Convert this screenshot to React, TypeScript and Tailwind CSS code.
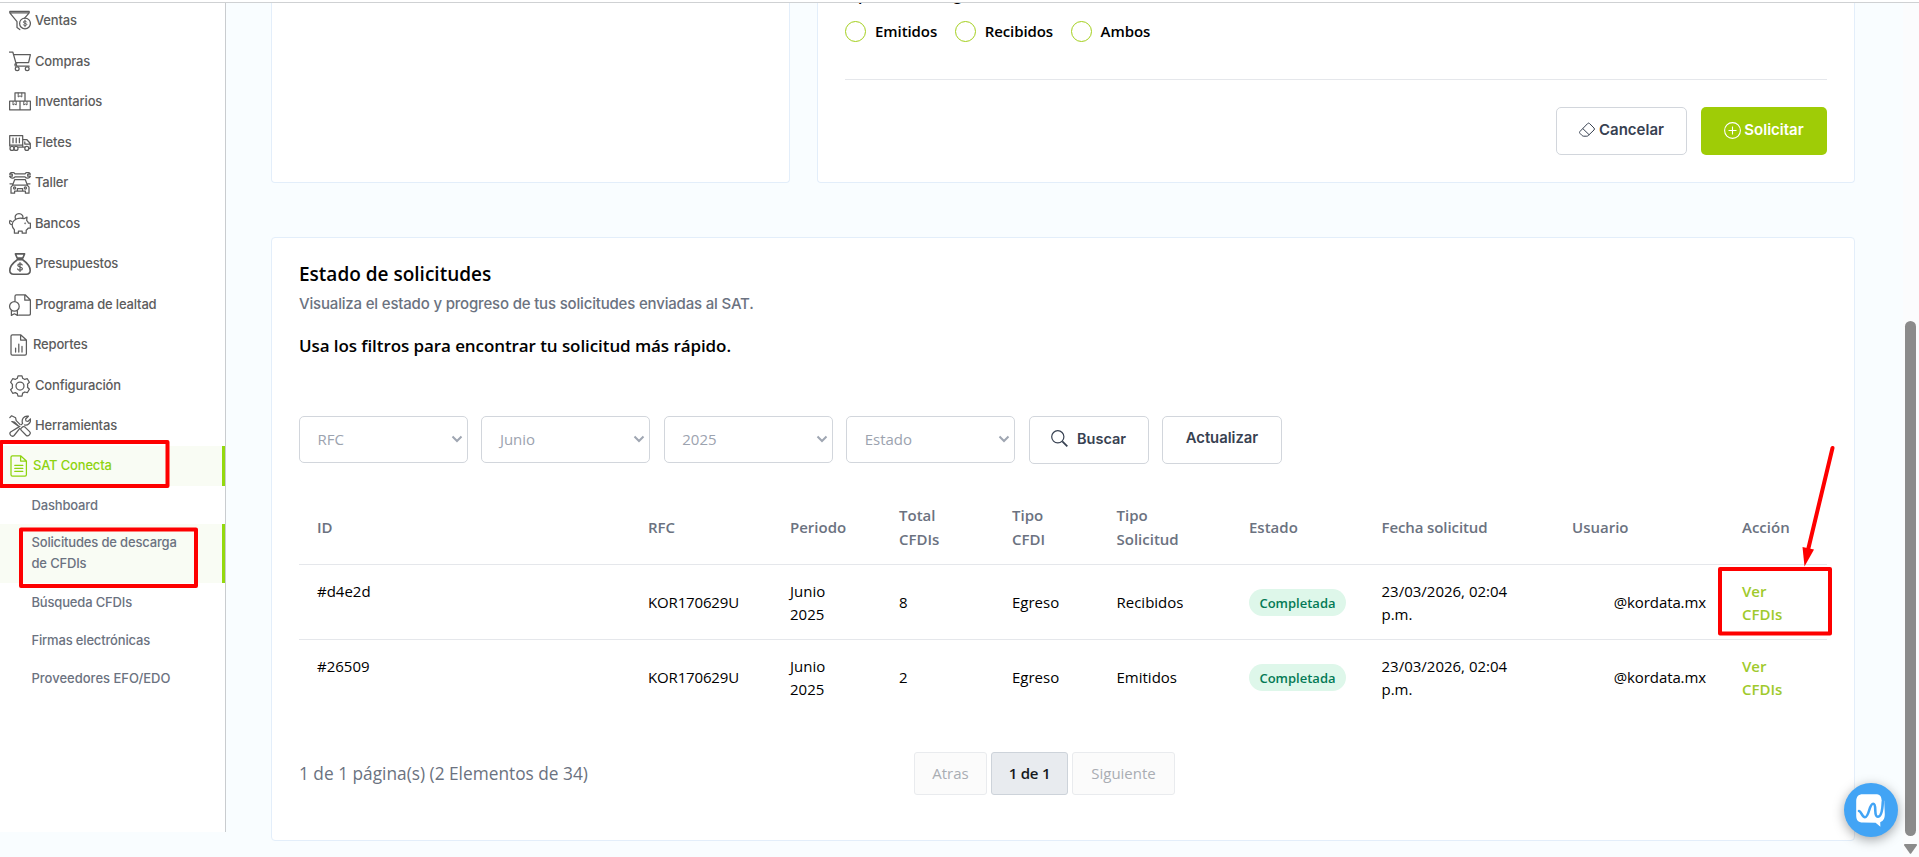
import type { ReactNode } from 'react';

type IconName =
    | 'ventas' | 'compras' | 'inventarios' | 'fletes' | 'taller' | 'bancos'
    | 'presupuestos' | 'lealtad' | 'reportes' | 'config' | 'herramientas' | 'sat';

interface MenuItem {
    label: string;
    icon: IconName;
}

const MENU: MenuItem[] = [
    { label: 'Ventas', icon: 'ventas' },
    { label: 'Compras', icon: 'compras' },
    { label: 'Inventarios', icon: 'inventarios' },
    { label: 'Fletes', icon: 'fletes' },
    { label: 'Taller', icon: 'taller' },
    { label: 'Bancos', icon: 'bancos' },
    { label: 'Presupuestos', icon: 'presupuestos' },
    { label: 'Programa de lealtad', icon: 'lealtad' },
    { label: 'Reportes', icon: 'reportes' },
    { label: 'Configuración', icon: 'config' },
    { label: 'Herramientas', icon: 'herramientas' },
];

const SOLICITUDES = [
    { id: '#d4e2d', rfc: 'KOR170629U', total: 8, tipo: 'Egreso', solicitud: 'Recibidos' },
    { id: '#26509', rfc: 'KOR170629U', total: 2, tipo: 'Egreso', solicitud: 'Emitidos' },
];

// All menu icons share a 22x22 box
const ICONS: Record<IconName, ReactNode> = {
    ventas: (
        <>
            <path d="M10.800 19.600L8 17.600V11.600L.8 2.800V1.400h19.400v1.400l-4.600 5.400M1.400 2.800h18.400" />
            <circle cx="16" cy="13.400" r="5.400" />
            <path d="M17.700 11.900c-.4-1-3.300-1.200-3.300.2 0 1.500 3.400.8 3.400 2.400 0 1.400-3.100 1.300-3.600.2M16 10.200v6.600" strokeWidth="1" />
        </>
    ),
    compras: (
        <>
            <path d="M.4 1h3.400l4 14.200h12.400M4.600 3.600h16.800l-1.800 8H7M6.400 15.200c-1.200-2 .2-3 1.400-3" />
            <circle cx="8.200" cy="17.800" r="1.900" />
            <circle cx="18.200" cy="17.800" r="1.900" />
        </>
    ),
    inventarios: (
        <>
            <path d="M6 10.200V1.800h10v8.400M.6 10.200h20.800v8.600H.6zM11 10.200v8.600" />
            <path d="M9.200 2v4l1.800-1.200 1.800 1.200V2M4 10.400v3.600l1.600-1 1.600 1v-3.600M14.800 10.400v3.600l1.600-1 1.600 1v-3.600" strokeWidth="1" />
        </>
    ),
    fletes: (
        <>
            <path d="M.7 14V3.700h13V15H9.200M13.700 7.500h4l3.600 4v4.800h-1.500M13.700 15h2.200M15.800 9.900v2.200h5M1 13.100h12" />
            <path d="M4 6.100v4.600M7.200 6.100v4.600M10.400 6.100v4.600" />
            <circle cx="3" cy="16.400" r="2" />
            <circle cx="7" cy="16.400" r="2" />
            <circle cx="17.800" cy="16.400" r="2" />
        </>
    ),
    taller: (
        <>
            <path d="M.6 2.200h2.700v2H.6C1.400 6.400 4.600 6.800 6 4.800h10c1.400 2 4.600 1.600 5.400-.6h-2.700v-2h2.700C20.600 0 17.400-.2 16 1.800H6C4.600-.2 1.400 0 .6 2.200z" />
            <path d="M3.600 13l2.200-5.400h10.400l2.200 5.400M2 21.200V15.200l1.800-2h14.400l1.800 2v6h-3.600V19H5.600v2.200zM1 11.800h2.200M18.800 11.800H21M8.400 19v-2.400h5.200V19" />
            <circle cx="5.600" cy="15.900" r="1.100" />
            <circle cx="16.400" cy="15.900" r="1.100" />
        </>
    ),
    bancos: (
        <>
            <path d="M5 7.600c2.500-2.300 7-2.900 10-1.900l3-1.600-.3 3.400c1 .8 1.400 1.600 1.700 2.600h2v5h-2.200c-.6 1-1.200 1.600-2 2.200v2.900h-4v-2H9.400v2h-4v-3.500C2.600 14.300 2.400 10.300 5 7.600zM6.600 6C5.200 2.900 7.400.7 10 .7s4.800 2.200 3.600 4.700M3 11.700c-2.400 0-3-2.400-2-4.200l1.800 1" />
            <circle cx="16.200" cy="10.300" r=".3" />
        </>
    ),
    presupuestos: (
        <>
            <path d="M6.400.9h9.200l-1.800 4.200H8.200zM8.200 6.600h5.600M8 7C4.600 9.400.8 13.400.8 17.600c0 2.400 1.400 3.600 3.800 3.600h12.800c2.400 0 3.800-1.200 3.800-3.600 0-4.200-3.800-8.200-7.200-10.600" strokeWidth="1.600" />
            <path d="M13.200 11.900c-.6-1.500-4.400-1.500-4.400.4 0 2.200 4.600 1.200 4.600 3.500 0 1.900-4 1.900-4.800.2M11 9.600v8.800" />
        </>
    ),
    lealtad: (
        <>
            <path d="M6 7V2.200C6 1.300 6.600.8 7.400.8h8.800l5.200 5.200v13.800c0 .8-.6 1.400-1.400 1.400H9.600M15.800 1v5.200h5.400M2.400 16.600v4.800l3-1.600 3 1.600v-4.800" />
            <circle cx="5.400" cy="12.400" r="4.800" />
        </>
    ),
    reportes: (
        <path d="M3.400.8h8.200L17.400 6v13.800c0 .8-.6 1.400-1.400 1.400H3.400c-.8 0-1.400-.6-1.400-1.400V2.200C2 1.400 2.600.8 3.400.8zM11.600 1v5h5.600M6.600 18v-4M9.800 18v-8M13 18v-5.600" />
    ),
    config: (
        <>
            <path d="M9 .8h4l.7 2.600c.7.200 1.400.6 2 1l2.600-.7 2.100 3.500-1.900 1.900c.2.800.2 2.400 0 3.200l1.900 1.900-2.100 3.500-2.600-.7c-.6.500-1.300.8-2 1L13 21.200H9l-.7-2.600c-.7-.2-1.400-.5-2-1l-2.600.7-2.100-3.500 1.900-1.900c-.2-.8-.2-2.400 0-3.200L1.600 7.200l2.100-3.500 2.600.7c.6-.4 1.300-.8 2-1z" />
            <circle cx="11" cy="11" r="4" />
        </>
    ),
    herramientas: (
        <>
            <path d="M.8 2.600L2.600.8l4 2 .6 2.800 4 4M9.600 11.200L5.600 7.200l-2.800-.6zM12 13.400l1.800-1.600c.8-.4 1.600-.2 2.200.3l4.600 4.500c2 2-1.400 5.600-3.500 3.600l-4.800-4.800c-.6-.6-.7-1.400-.3-2z" />
            <path d="M12.400 9.600l1.200-1.200c-1.600-4 1.600-8.200 5.800-7.200l-2.800 2.800.4 2 2 .4 2.400-2.600c.8 4-2.800 7.200-6 6.200M10.800 11.400L1.600 17c-2 2.200 1.200 5.600 3.500 3.500l5.500-6.900" />
        </>
    ),
    sat: (
        <path d="M3.400.8h8.200L17.400 6v13.800c0 .8-.6 1.400-1.400 1.400H3.400c-.8 0-1.400-.6-1.400-1.400V2.200C2 1.400 2.600.8 3.400.8zM11.600 1v5h5.600M5.800 10.400h8M5.800 13.400h8M5.800 16.400h8" />
    ),
};

function MenuIcon({ name }: { name: IconName }) {
    const isFile = name === 'reportes' || name === 'sat';
    return (
        <svg
            className={isFile ? 'ml-[9px] mr-[2px] shrink-0' : 'ml-[9px] mr-[4px] shrink-0'}
            width="22"
            height="22"
            viewBox="0 0 22 22"
            fill="none"
            stroke="currentColor"
            strokeWidth="1.25"
            strokeLinecap="round"
            strokeLinejoin="round"
        >
            {ICONS[name]}
        </svg>
    );
}

function Sidebar() {
    return (
        <aside className="w-[226px] h-[829px] shrink-0 bg-white border-r border-[#c9cccf] font-[Inter,sans-serif] font-medium text-[13px] tracking-[-0.17px]">
            <nav className="-mt-[3px] text-[#5c5c5c]">
                {MENU.map((item) => (
                    <div key={item.label} className="h-[40.5px] flex items-center">
                        <div className="mt-[2px]"><MenuIcon name={item.icon} /></div>
                        <span className="mt-[1px]">{item.label}</span>
                    </div>
                ))}
                <div className="h-[40.5px] flex items-center bg-[#f9fcf4] border-r-[3px] border-[#94d90f] text-[#8ed30f]">
                    <div className="mt-[1px]"><MenuIcon name="sat" /></div>
                    <span>SAT Conecta</span>
                </div>
            </nav>
            <nav className="text-[#6b7280] leading-[21px]">
                <div className="h-[38px] pl-[31.5px] flex items-center">Dashboard</div>
                <div className="h-[59px] pl-[31.5px] flex items-center bg-[#f9fcf4] border-r-[3px] border-[#94d90f]">
                    <span className="w-[160px] -mt-[2px]">Solicitudes de descarga de CFDIs</span>
                </div>
                <div className="h-[38px] pl-[31.5px] flex items-center">Búsqueda CFDIs</div>
                <div className="h-[38px] pl-[31.5px] flex items-center">Firmas electrónicas</div>
                <div className="h-[38px] pl-[31.5px] flex items-center tracking-[0px]">Proveedores EFO/EDO</div>
            </nav>
        </aside>
    );
}

function Radio({ label }: { label: string }) {
    return (
        <label className="flex items-center gap-[9px]">
            <span className="size-[21px] rounded-full border border-[#a3cf1c]" />
            <span>{label}</span>
        </label>
    );
}

function FilterSelect({ label }: { label: string }) {
    return (
        <div className="w-[169px] h-[47px] pl-[17.5px] pr-[4px] flex items-center justify-between rounded-[5px] border border-[#d2d6dc] text-[#9ca3af] text-[15px]">
            <span>{label}</span>
            <svg className="-mt-[1px]" width="12" height="8" viewBox="0 0 12 8" fill="none" stroke="#9fa6b2" strokeWidth="2">
                <path d="M1.500 1.500L6 6l4.500-4.500" />
            </svg>
        </div>
    );
}

function RequestForm() {
    return (
        <section className="w-[1038px] h-[180px] px-[27px] overflow-hidden bg-white border border-t-0 border-[#e3eefa] rounded-b">
            <p className="-mt-[21px] h-[24px] leading-[24px] text-[15.5px] font-semibold">Tipo de descarga</p>
            <div className="mt-[10.500px] h-[29px] flex items-center gap-[17.500px] text-[15px] tracking-[-0.080px] font-semibold">
                <Radio label="Emitidos" />
                <Radio label="Recibidos" />
                <Radio label="Ambos" />
            </div>
            <hr className="mt-[33.500px] border-[#e5e7eb]" />
            <div className="mt-[27px] flex justify-end gap-[14px] font-[Inter,sans-serif] font-semibold text-[15px]">
                <button className="w-[131px] h-[48px] pb-[2px] flex items-center justify-center gap-1 rounded-[5px] border border-[#d2d6dc] text-[#374151]">
                    <svg width="16" height="16" viewBox="0 0 16 16" fill="none" stroke="currentColor" strokeWidth="1">
                        <path d="M8.600 1.600a1.400 1.400 0 0 1 2 0l4.400 4.400a1.400 1.400 0 0 1 0 2l-5.800 5.600a2 2 0 0 1-1.400.6H4.600a2 2 0 0 1-1.400-.6L1 11.400a1.400 1.400 0 0 1 0-2zM3.800 6.600l6.400 6.200" />
                    </svg>
                    Cancelar
                </button>
                <button className="w-[126px] h-[48px] pb-[2px] flex items-center justify-center gap-[3px] rounded-[5px] bg-[#9fcc06] text-white">
                    <svg width="17" height="17" viewBox="0 0 17 17" fill="none" stroke="currentColor" strokeWidth="1.100">
                        <circle cx="8.500" cy="8.500" r="7.900" />
                        <path d="M8.500 4.500v8M4.500 8.500h8" />
                    </svg>
                    Solicitar
                </button>
            </div>
        </section>
    );
}

function RequestsTable() {
    return (
        <table className="w-[1528px] table-fixed text-[15px] leading-[23px] text-left">
            <colgroup>
                <col className="w-[331px]" />
                <col className="w-[142px]" />
                <col className="w-[109px]" />
                <col className="w-[113px]" />
                <col className="w-[104.500px]" />
                <col className="w-[132.500px]" />
                <col className="w-[132.500px]" />
                <col className="w-[190.500px]" />
                <col className="w-[170px]" />
                <col className="w-[103px]" />
            </colgroup>
            <thead>
                <tr className="h-[73px] border-b border-[#e5e7eb] text-[#6b7280] leading-[24px] [&>th]:font-semibold [&>th]:px-[18px]">
                    <th>ID</th>
                    <th>RFC</th>
                    <th>Periodo</th>
                    <th>Total<br />CFDIs</th>
                    <th>Tipo<br />CFDI</th>
                    <th>Tipo<br />Solicitud</th>
                    <th>Estado</th>
                    <th className="tracking-[-0.1px]">Fecha solicitud</th>
                    <th>Usuario</th>
                    <th>Acción</th>
                </tr>
            </thead>
            <tbody>
                {SOLICITUDES.map((s) => (
                    <tr key={s.id} className="h-[75px] border-b border-[#e5e7eb] last:border-b-0 [&>td]:px-[18px] [&>td]:pt-[2px]">
                        <td className="align-top">
                            <div className="mt-[13.500px]">{s.id}</div>
                        </td>
                        <td className="tracking-[-0.15px]">{s.rfc}</td>
                        <td>Junio<br />2025</td>
                        <td>{s.total}</td>
                        <td>{s.tipo}</td>
                        <td>{s.solicitud}</td>
                        <td>
                            <span className="w-[97px] h-[27px] pt-[2px] flex items-center justify-center rounded-full bg-[#def7ea] text-[#047a55] text-[13px] font-semibold">
                                Completada
                            </span>
                        </td>
                        <td>23/03/2026, 02:04<br />p.m.</td>
                        <td className="text-right tracking-[-0.1px]">@kordata.mx</td>
                        <td className="text-[#9fca2c] font-semibold">Ver<br />CFDIs</td>
                    </tr>
                ))}
            </tbody>
        </table>
    );
}

function Pagination() {
    return (
        <div className="flex items-center">
            <p className="w-[615px] text-[17.300px] text-[#6b7280]">1 de 1 página(s) (2 Elementos de 34)</p>
            <div className="flex gap-1 text-[15px] text-[#a9adb3]">
                <button className="w-[73px] h-[43px] rounded-[3px] border border-[#e9ebee] bg-[#fbfbfb]">Atras</button>
                <button className="w-[77px] h-[43px] rounded-[3px] border border-[#cdd3da] bg-[#e8ebef] text-[#16191d] font-semibold tracking-[-0.2px]">1 de 1</button>
                <button className="w-[103px] h-[43px] rounded-[3px] border border-[#e9ebee] bg-[#fbfbfb]">Siguiente</button>
            </div>
        </div>
    );
}

function RequestsCard() {
    return (
        <section className="mt-[54px] w-[1584px] h-[604px] pl-[27px] bg-white border border-[#e3eefa] rounded">
            <h2 className="mt-[21px] h-[30px] leading-[30px] text-[19px] font-semibold">Estado de solicitudes</h2>
            <p className="h-[30px] leading-[30px] text-[15px] tracking-[-0.180px] text-[#6b7280] font-medium font-[Inter,sans-serif]">
                Visualiza el estado y progreso de tus solicitudes enviadas al SAT.
            </p>
            <p className="mt-[12px] h-[30px] leading-[30px] text-[17px] tracking-[-0.080px] font-semibold">
                Usa los filtros para encontrar tu solicitud más rápido.
            </p>
            <div className="mt-[55px] flex gap-[13.400px]">
                <FilterSelect label="RFC" />
                <FilterSelect label="Junio" />
                <FilterSelect label="2025" />
                <FilterSelect label="Estado" />
                <button className="w-[120px] h-[48px] pb-[3px] flex items-center justify-center gap-[9px] rounded-[5px] border border-[#d2d6dc] text-[#374151] font-[Inter,sans-serif] font-semibold text-[14.500px]">
                    <svg width="17" height="17" viewBox="0 0 17 17" fill="none" stroke="currentColor" strokeWidth="1.200">
                        <circle cx="6.800" cy="6.800" r="6.100" />
                        <path d="M11.300 11.300l5 5" strokeWidth="1.800" />
                    </svg>
                    Buscar
                </button>
                <button className="w-[120px] h-[48px] pb-[3px] rounded-[5px] border border-[#d2d6dc] text-[#374151] font-[Inter,sans-serif] font-semibold text-[14.800px]">
                    Actualizar
                </button>
            </div>
            <div className="mt-[27px] h-[261px]">
                <RequestsTable />
            </div>
            <Pagination />
        </section>
    );
}

function Scrollbar() {
    return (
        <div className="w-[16px] pl-[2px] shrink-0 bg-[#fbfcfd]">
            <div className="mt-[318px] w-[11px] h-[515px] rounded-full bg-[#8b8b8b]" />
            <svg className="mt-2 -ml-px" width="13" height="10" viewBox="0 0 13 10" fill="#8b8b8b">
                <path d="M1 0h11a1 1 0 0 1 .8 1.500L7.300 9.300a1 1 0 0 1-1.600 0L.2 1.500A1 1 0 0 1 1 0z" />
            </svg>
        </div>
    );
}

function ChatBubble() {
    return (
        <button className="absolute left-[1844px] top-[783px] size-[54px] rounded-full bg-[#42a4f5] shadow-[0_3px_12px_rgba(0,0,0,0.35)] flex items-center justify-center">
            <svg width="32" height="34" viewBox="0 0 32 34">
                <path d="M8 1.200h12.600c4 0 5.600 1.600 6 5.800L27.400 12l1.800-4.400.6 13.400c0 4-1 6.800-4.600 8.200l.2 4.600-4.800-4L8 29.600c-5 0-6.800-2.600-6.800-7V8.400c0-4.600 2-7.200 6.800-7.200z" fill="#fff" />
                <path d="M4 18c2.400.4 3 6.200 6 6.200 4.200 0 4-13.400 8.200-13.400 4 0 0 13 4.600 13 3.200 0 4.600-5 5-14.800" fill="none" stroke="#42a4f5" strokeWidth="2.600" strokeLinecap="round" />
            </svg>
        </button>
    );
}

// Red callouts drawn on top of the page
function Callouts() {
    return (
        <svg className="absolute left-0 top-0 pointer-events-none" width="1919" height="857" fill="none" stroke="#fe0000" strokeWidth="4" strokeLinejoin="round">
            <rect x="1" y="442" width="166.500" height="44" />
            <rect x="21" y="529.500" width="175" height="56.500" />
            <rect x="1720" y="569" width="110" height="64.500" />
            <path d="M1832.500 448L1808 550" strokeLinecap="round" />
            <path d="M1802.500 547l11.500 2.500-9.500 17z" fill="#fe0000" stroke="none" />
        </svg>
    );
}

export default function App() {
    return (
        <div className="relative w-[1919px] h-[857px] overflow-hidden bg-[#f9fdff] text-black font-['Open_Sans',sans-serif]">
            <header className="h-[3px] bg-white border-b border-[#cfd1d3]" />
            <div className="flex h-[854px]">
                <Sidebar />
                <main className="flex-1 pl-[45px]">
                    <div className="flex gap-[27px]">
                        <section className="w-[519px] h-[180px] bg-white border border-t-0 border-[#e3eefa] rounded-b" />
                        <RequestForm />
                    </div>
                    <RequestsCard />
                </main>
                <Scrollbar />
            </div>
            <Callouts />
            <ChatBubble />
        </div>
    );
}
